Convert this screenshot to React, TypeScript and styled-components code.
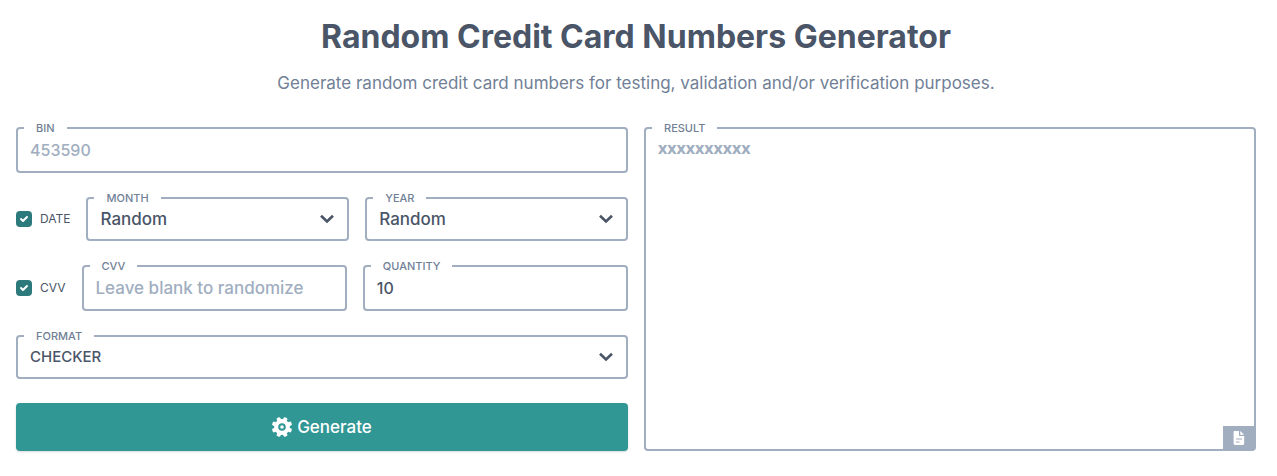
import React from "react";
import styled, { createGlobalStyle } from "styled-components";

const Global = createGlobalStyle`
  *, *::before, *::after { box-sizing: border-box; }
  body { margin: 0; background: #fff; color: #4a5568; font: 500 17px/24px Inter, sans-serif; }
`;

const Page = styled.main`padding: 17px 21px 24px 16px;`;
const Header = styled.header`text-align: center;`;
const Title = styled.h1`margin: 0; font-size: 32px; line-height: 40px; font-weight: 700;`;
const Subtitle = styled.p`margin: 14px 0 0; font-weight: 400; line-height: 24px; color: #718096;`;
const Columns = styled.div`
  display: grid; grid-template-columns: 1fr 1fr; gap: 16px; margin-top: 24px;
`;
const Form = styled.form`display: flex; flex-direction: column; gap: 16px; min-width: 0;`;
const Row = styled.div`display: flex; gap: 16px;`;
const Field = styled.fieldset`
  flex: 1 1 0; min-width: 0; margin: 0; padding: 0; border: 2px solid #a0aec0; border-radius: 4px;
`;
const ResultField = styled(Field)`position: relative; display: flex;`;
const Legend = styled.legend`
  margin-left: 6px; padding: 0 12px; font-size: 11px; line-height: 18px; font-weight: 500; color: #718096;
`;
const Input = styled.input<{ $compact?: boolean }>`
  display: block; width: 100%; height: 34px; padding: 0 12px 8px; border: 0; outline: 0;
  background: transparent; color: inherit; font: inherit; font-size: ${(p) => (p.$compact ? 16 : 17)}px;
  &::placeholder { color: #a0aec0; opacity: 1; }
`;
const SelectWrap = styled.div`position: relative;`;
const Select = styled.select<{ $compact?: boolean }>`
  display: block; width: 100%; height: 32px; padding: 0 40px 10px 12px; border: 0; outline: 0;
  appearance: none; background: transparent; color: inherit; font: inherit;
  font-size: ${(p) => (p.$compact ? 15 : 17)}px;
`;
const Chevron = styled.svg`
  position: absolute; right: 8px; top: 0; width: 24px; height: 24px; pointer-events: none;
`;
const Check = styled.label<{ $width: number }>`
  display: flex; align-items: center; gap: 8px; flex: 0 0 ${(p) => p.$width}px; padding-top: 8px;
  font-size: 12px; line-height: 18px; font-weight: 400; white-space: nowrap;
`;
const Box = styled.span`position: relative; display: flex; width: 16px; height: 16px; flex: none;`;
const Tick = styled.input`
  appearance: none; width: 16px; height: 16px; margin: 0; border-radius: 4px; background: #2c7a7b;
`;
const TickMark = styled.svg`position: absolute; inset: 0; width: 16px; height: 16px; pointer-events: none;`;
const Generate = styled.button`
  display: flex; align-items: center; justify-content: center; gap: 5px; height: 48px; margin-top: 8px;
  padding: 0; border: 0; border-radius: 4px; background: #319795; color: #fff; font: inherit;
  box-shadow: 0 1px 3px rgba(0, 0, 0, 0.1), 0 1px 2px rgba(0, 0, 0, 0.06);
`;
const GearIcon = styled.svg`width: 20px; height: 20px;`;
const Result = styled.textarea`
  flex: 1; min-width: 0; padding: 0 12px; border: 0; outline: 0; resize: none; background: transparent;
  color: inherit; font: 700 16px/22px "Open Sans", sans-serif;
  &::placeholder { color: #a0aec0; opacity: 1; }
`;
const Copy = styled.button`
  position: absolute; right: 0; bottom: 0; display: flex; align-items: center; justify-content: center;
  width: 31px; height: 23px; padding: 0; border: 0; background: #a0aec0; color: #fff;
`;

type SelectFieldProps = { id: string; label: string; value: string; compact?: boolean };

function SelectField({ id, label, value, compact }: SelectFieldProps) {
  return (
    <Field>
      <Legend><label htmlFor={id}>{label}</label></Legend>
      <SelectWrap>
        <Select id={id} defaultValue={value} $compact={compact}><option>{value}</option></Select>
        <Chevron viewBox="0 0 24 24" fill="none" stroke="#4a5568" strokeWidth="2.6" aria-hidden="true">
          <path d="M6 8.7l6 5.8 6-5.8" />
        </Chevron>
      </SelectWrap>
    </Field>
  );
}

type InputFieldProps = { id: string; label: string; placeholder?: string; defaultValue?: string; compact?: boolean };

function InputField({ id, label, compact, ...rest }: InputFieldProps) {
  return (
    <Field>
      <Legend><label htmlFor={id}>{label}</label></Legend>
      <Input id={id} $compact={compact} {...rest} />
    </Field>
  );
}

function Toggle({ label, width }: { label: string; width: number }) {
  return (
    <Check $width={width}>
      <Box>
        <Tick type="checkbox" defaultChecked />
        <TickMark viewBox="0 0 16 16" fill="#fff" aria-hidden="true">
          <path d="M5.707 7.293a1 1 0 0 0-1.414 1.414l2 2a1 1 0 0 0 1.414 0l4-4a1 1 0 0 0-1.414-1.414L7 8.586 5.707 7.293z" />
        </TickMark>
      </Box>
      {label}
    </Check>
  );
}

function Gear() {
  return (
    <GearIcon viewBox="0 0 20 20" fill="#fff" aria-hidden="true">
      <circle cx="10" cy="10" r="7.9" />
      {[22.5, 67.5, 112.5, 157.5].map((angle) => (
        <rect key={angle} x="8" y="-0.2" width="4" height="20.4" rx="1.2" transform={`rotate(${angle} 10 10)`} />
      ))}
      <circle cx="10" cy="10" r="2.8" fill="none" stroke="#319795" strokeWidth="2" />
    </GearIcon>
  );
}

export default function App() {
  return (
    <Page>
      <Global />
      <Header>
        <Title>Random Credit Card Numbers Generator</Title>
        <Subtitle>Generate random credit card numbers for testing, validation and/or verification purposes.</Subtitle>
      </Header>
      <Columns>
        <Form onSubmit={(e) => e.preventDefault()}>
          <Row><InputField id="bin" label="BIN" placeholder="453590" compact /></Row>
          <Row>
            <Toggle label="DATE" width={52} />
            <SelectField id="month" label="MONTH" value="Random" />
            <SelectField id="year" label="YEAR" value="Random" />
          </Row>
          <Row>
            <Toggle label="CVV" width={48} />
            <InputField id="cvv" label="CVV" placeholder="Leave blank to randomize" />
            <InputField id="quantity" label="QUANTITY" defaultValue="10" compact />
          </Row>
          <Row><SelectField id="format" label="FORMAT" value="CHECKER" compact /></Row>
          <Generate type="submit">
            <Gear />
            Generate
          </Generate>
        </Form>
        <ResultField>
          <Legend><label htmlFor="result">RESULT</label></Legend>
          <Result id="result" placeholder="xxxxxxxxxx" />
          <Copy type="button" aria-label="Copy result">
            <svg width="16" height="16" viewBox="0 0 16 16" aria-hidden="true">
              <path fill="#fff" d="M3.6 1H8v4.2c0 .5.3.8.8.8h4.4v7.6c0 .8-.6 1.4-1.4 1.4H4c-.8 0-1.4-.6-1.4-1.4V2c0-.6.4-1 1-1zM9.2 1l4 3.8h-4z" />
              <path fill="none" stroke="#a0aec0" strokeWidth="1.2" d="M5 9h6M5 12h3.6" />
            </svg>
          </Copy>
        </ResultField>
      </Columns>
    </Page>
  );
}
